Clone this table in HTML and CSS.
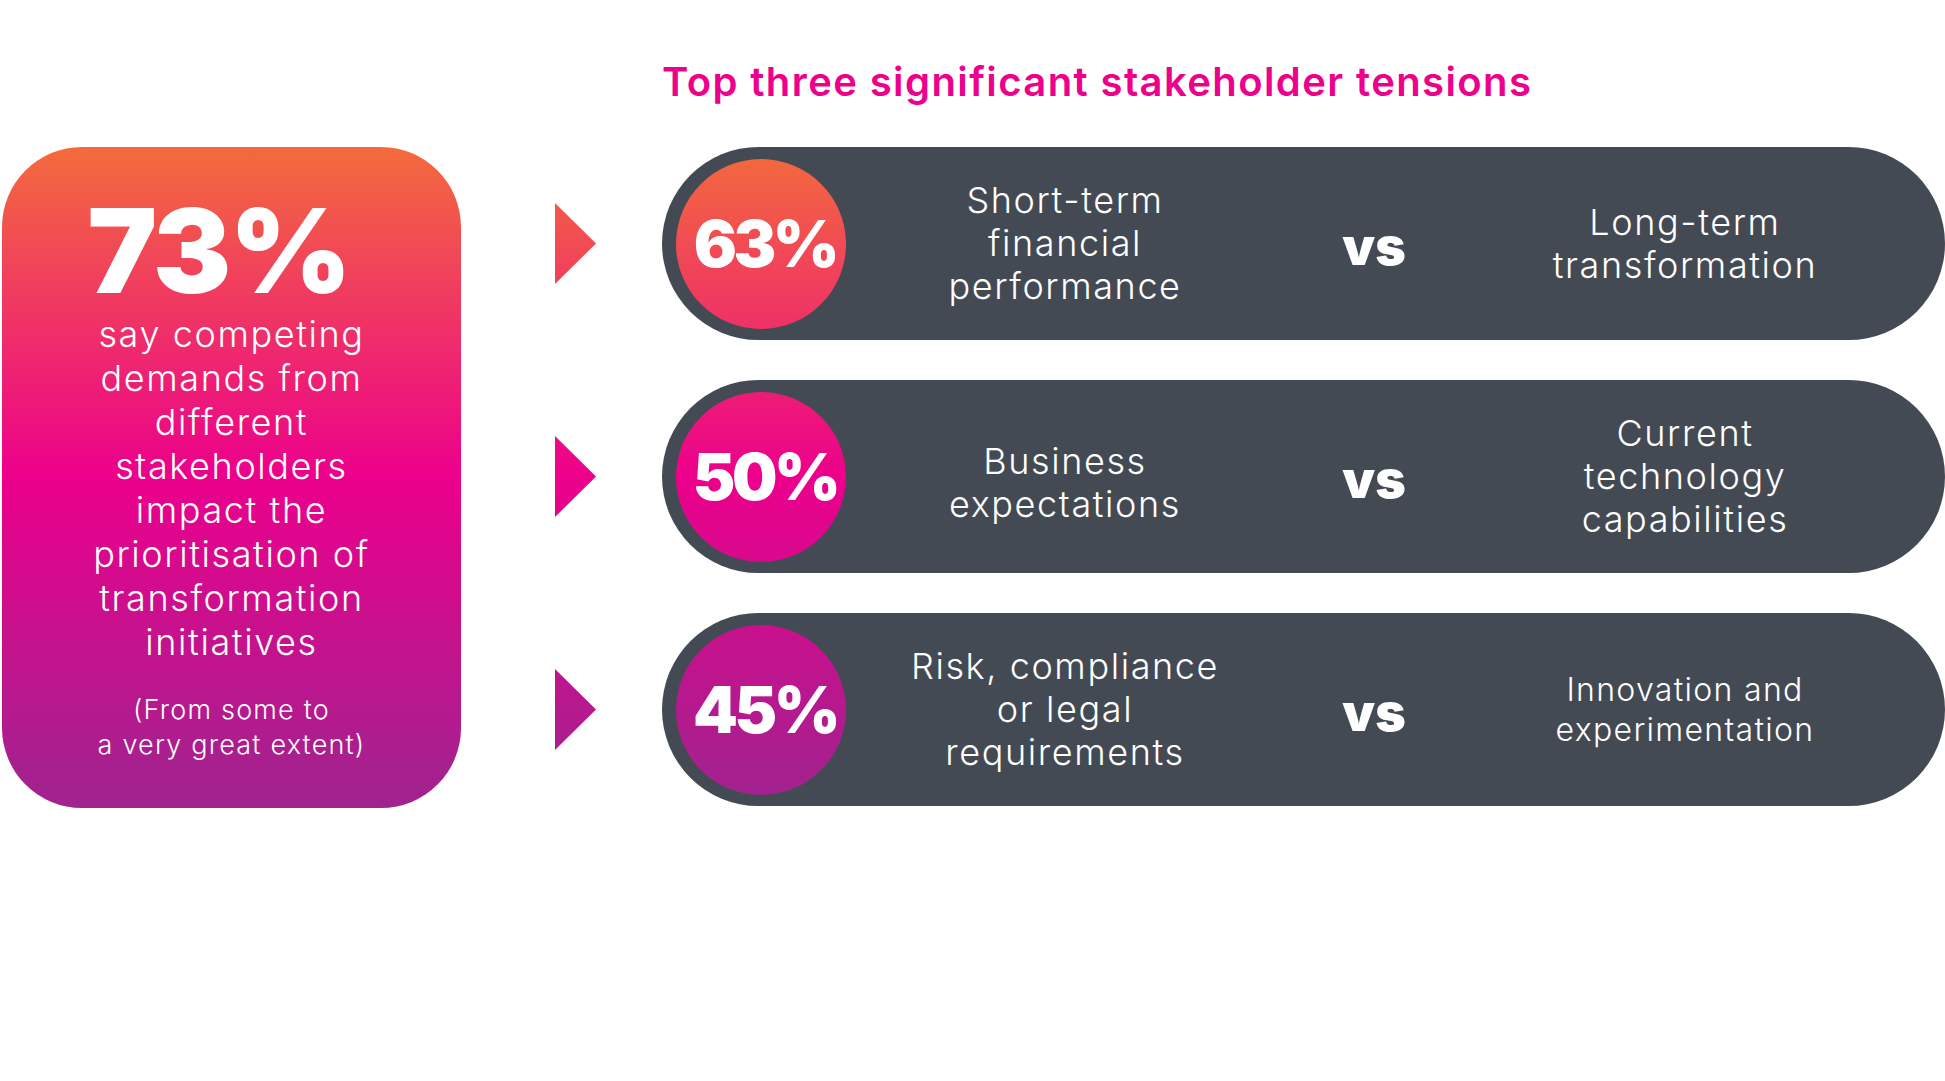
FILE: index.html
```html
<!DOCTYPE html>
<html lang="en">
<head>
<meta charset="utf-8">
<title>Stakeholder tensions</title>
<link rel="stylesheet" href="styles.css">
</head>
<body>
<main class="page">
  <section class="card grad">
    <div class="big">73%</div>
    <p class="desc">say competing<br>demands from<br>different<br>stakeholders<br>impact the<br>prioritisation of<br>transformation<br>initiatives</p>
    <p class="note">(From some to<br>a very great extent)</p>
  </section>
  <section class="main">
    <h1 class="title">Top three significant stakeholder tensions</h1>
    <div class="rows">
      <div class="row">
        <span class="arrow grad"></span>
        <div class="pill">
          <div class="badge grad">63%</div>
          <div class="txt">Short-term<br>financial<br>performance</div>
          <div class="vs">vs</div>
          <div class="txt">Long-term<br>transformation</div>
        </div>
      </div>
      <div class="row">
        <span class="arrow grad"></span>
        <div class="pill">
          <div class="badge grad">50%</div>
          <div class="txt low">Business<br>expectations</div>
          <div class="vs">vs</div>
          <div class="txt">Current<br>technology<br>capabilities</div>
        </div>
      </div>
      <div class="row">
        <span class="arrow grad"></span>
        <div class="pill">
          <div class="badge grad">45%</div>
          <div class="txt">Risk, compliance<br>or legal<br>requirements</div>
          <div class="vs">vs</div>
          <div class="txt sm">Innovation and<br>experimentation</div>
        </div>
      </div>
    </div>
  </section>
</main>
</body>
</html>
```
FILE: styles.css
```css
html, body {
  margin: 0;
  padding: 0;
  background: #ffffff;
}
body {
  width: 1945px;
  height: 1081px;
  overflow: hidden;
  font-family: Inter, "Liberation Sans", sans-serif;
}
.page {
  display: flex;
  align-items: flex-start;
  padding-left: 2px;
  height: 1081px;
  box-sizing: border-box;
}
.grad {
  background-image: linear-gradient(180deg, #f36b3c 147px, #ec008c 477px, #9e248f 808px);
  background-attachment: fixed;
}
.card {
  width: 459px;
  height: 661px;
  margin-top: 147px;
  border-radius: 80px;
  box-sizing: border-box;
  padding-top: 54px;
  text-align: center;
  color: #ffffff;
  flex: none;
}
.big {
  font-weight: 900;
  font-size: 117px;
  line-height: 100px;
  letter-spacing: -2px;
  padding-right: 26px;
}
.desc {
  margin: 11px 0 0;
  font-weight: 300;
  font-size: 36px;
  line-height: 44px;
  letter-spacing: 1.6px;
}
.note {
  margin: 28px 0 0;
  font-weight: 300;
  font-size: 27px;
  line-height: 35px;
  letter-spacing: 1.2px;
}
.main {
  margin-left: 94px;
  flex: 1;
  padding-top: 62px;
}
.title {
  margin: 0 0 0 107px;
  font-weight: 600;
  font-size: 40px;
  line-height: 40px;
  letter-spacing: 1.4px;
  color: #ec008c;
  white-space: nowrap;
}
.rows {
  display: flex;
  flex-direction: column;
  gap: 40px;
  margin-top: 45px;
}
.row {
  display: flex;
  align-items: center;
  height: 193px;
}
.arrow {
  flex: none;
  width: 41px;
  height: 81px;
  clip-path: polygon(0 0, 100% 50%, 0 100%);
}
.pill {
  flex: none;
  margin-left: 66px;
  width: 1283px;
  height: 193px;
  border-radius: 96.5px;
  background: #434a54;
  box-sizing: border-box;
  padding-left: 14px;
  display: grid;
  grid-template-columns: 170px 438px 180px 442px;
  align-items: center;
  color: #ffffff;
}
.badge {
  width: 170px;
  height: 170px;
  box-sizing: border-box;
  padding-left: 8px;
  border-radius: 50%;
  display: flex;
  align-items: center;
  justify-content: center;
  font-weight: 900;
  font-size: 64px;
  letter-spacing: -3.5px;
}
.txt {
  text-align: center;
  font-weight: 300;
  font-size: 36px;
  line-height: 43px;
  letter-spacing: 1.6px;
}
.txt.low {
  padding-top: 12px;
}
.txt.sm {
  font-size: 32px;
  line-height: 40px;
  letter-spacing: 1.3px;
}
.vs {
  text-align: center;
  font-weight: 900;
  font-size: 52px;
  line-height: 52px;
  padding-top: 6px;
}
```
